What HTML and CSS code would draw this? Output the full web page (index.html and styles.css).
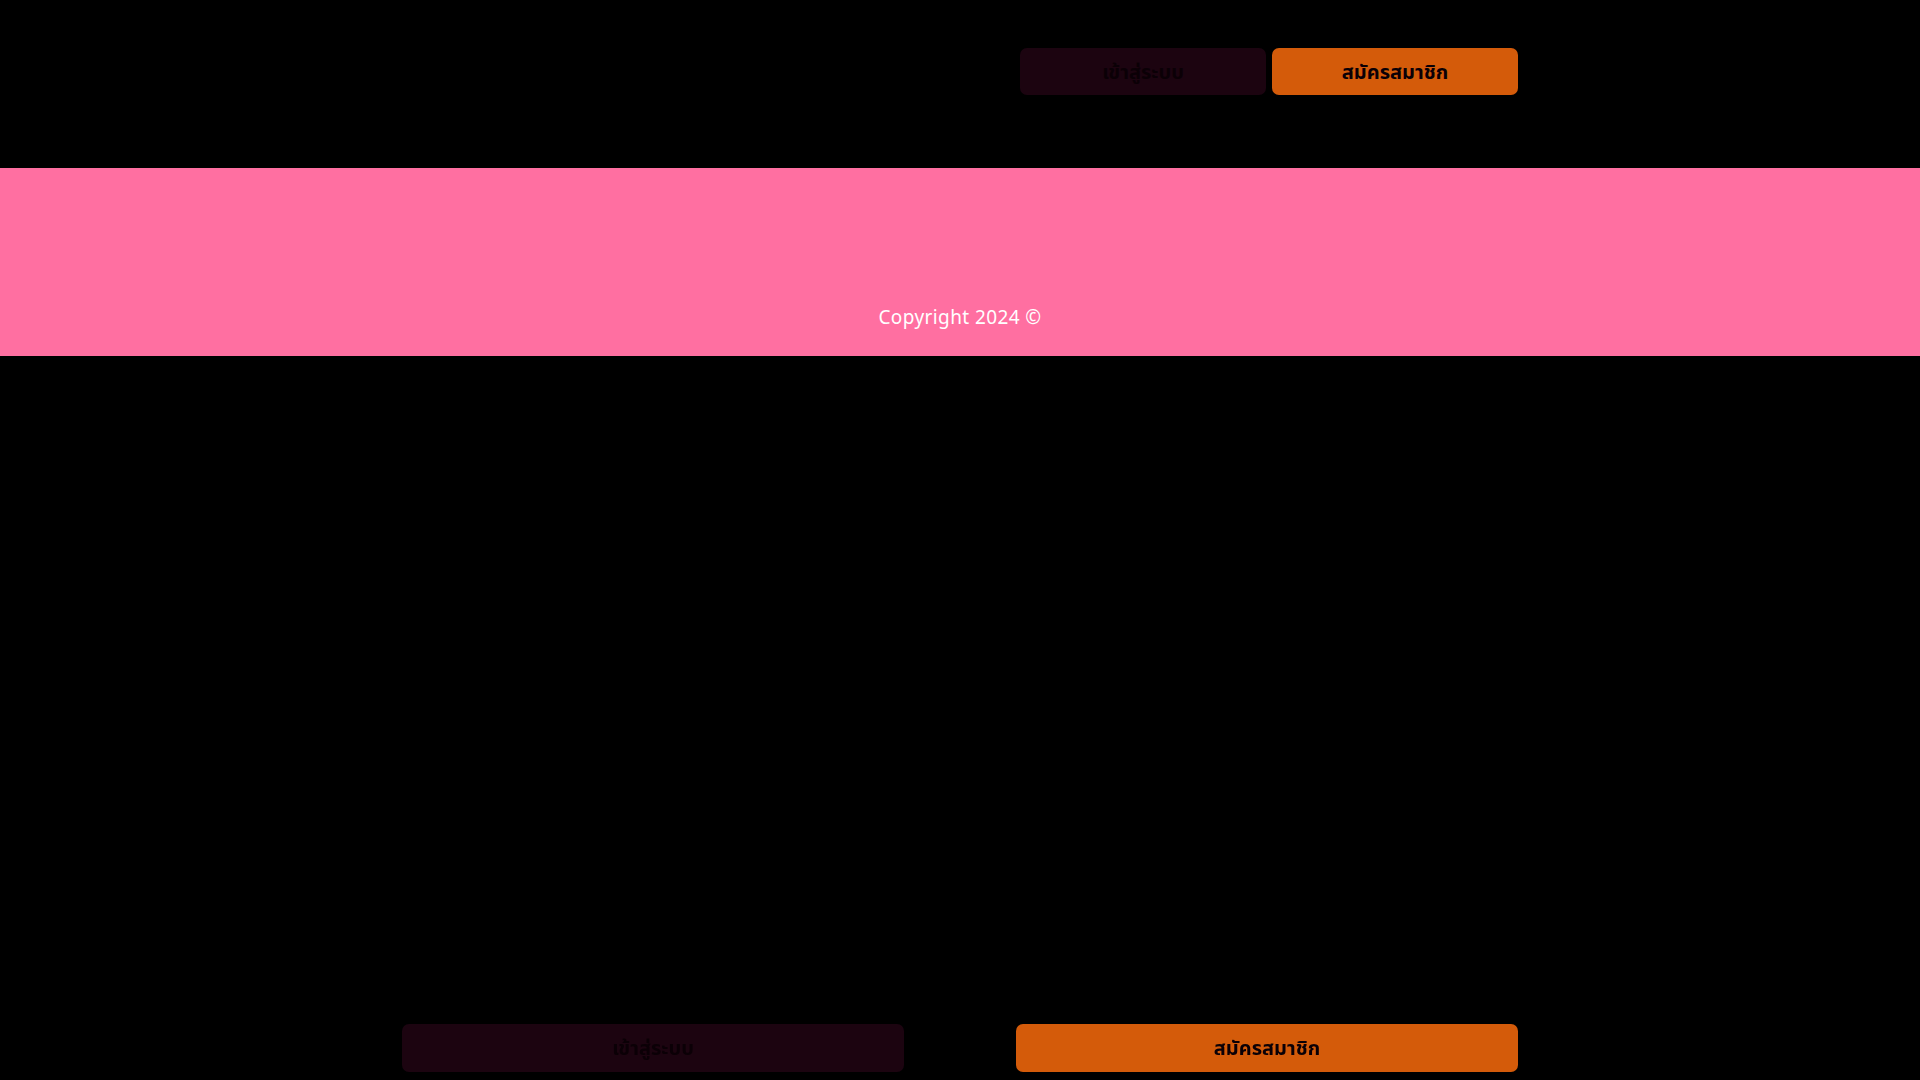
FILE: index.html
```html
<!DOCTYPE html>
<html lang="th">
<head>
<meta charset="utf-8">
<title>Home</title>
<link rel="stylesheet" href="styles.css">
</head>
<body>
<header class="site-header">
  <div class="header-inner">
    <div class="logo"></div>
    <div class="header-actions">
      <a class="btn btn-login" href="#">เข้าสู่ระบบ</a>
      <a class="btn btn-register" href="#">สมัครสมาชิก</a>
    </div>
  </div>
</header>
<footer class="site-footer">
  <p class="copyright">Copyright 2024 ©</p>
</footer>
<div class="bottom-bar">
  <div class="bottom-inner">
    <a class="btn btn-login btn-wide" href="#">เข้าสู่ระบบ</a>
    <a class="btn btn-register btn-wide" href="#">สมัครสมาชิก</a>
  </div>
</div>
</body>
</html>
```
FILE: styles.css
```css
html, body {
  margin: 0;
  padding: 0;
  background: #000;
  height: 100%;
}
body {
  font-family: "Noto Sans Thai", "Noto Sans", "DejaVu Sans", sans-serif;
  min-height: 1080px;
}
.site-header {
  height: 168px;
  background: #000;
}
.header-inner {
  width: 1116px;
  margin: 0 auto;
  display: flex;
  justify-content: space-between;
  padding-top: 48px;
}
.header-actions {
  display: flex;
  gap: 6px;
}
.btn {
  display: flex;
  align-items: center;
  justify-content: center;
  height: 47px;
  width: 246px;
  padding-top: 2px;
  border-radius: 7px;
  text-decoration: none;
  color: #0b0006;
  font-size: 20px;
  font-weight: 700;
  box-sizing: border-box;
}
.btn-login {
  background: #1c0410;
}
.btn-register {
  background: #d45b0a;
}
.site-footer {
  height: 188px;
  background: #ff6fa1;
  display: flex;
  align-items: flex-end;
  justify-content: center;
}
.copyright {
  margin: 0 0 25px;
  color: #fff;
  font-size: 19px;
  line-height: 24px;
  letter-spacing: 0.4px;
}
.bottom-bar {
  position: fixed;
  left: 0;
  right: 0;
  bottom: 8px;
}
.bottom-inner {
  width: 1116px;
  margin: 0 auto;
  display: flex;
  justify-content: space-between;
}
.btn-wide {
  width: 502px;
  height: 48px;
}
```
